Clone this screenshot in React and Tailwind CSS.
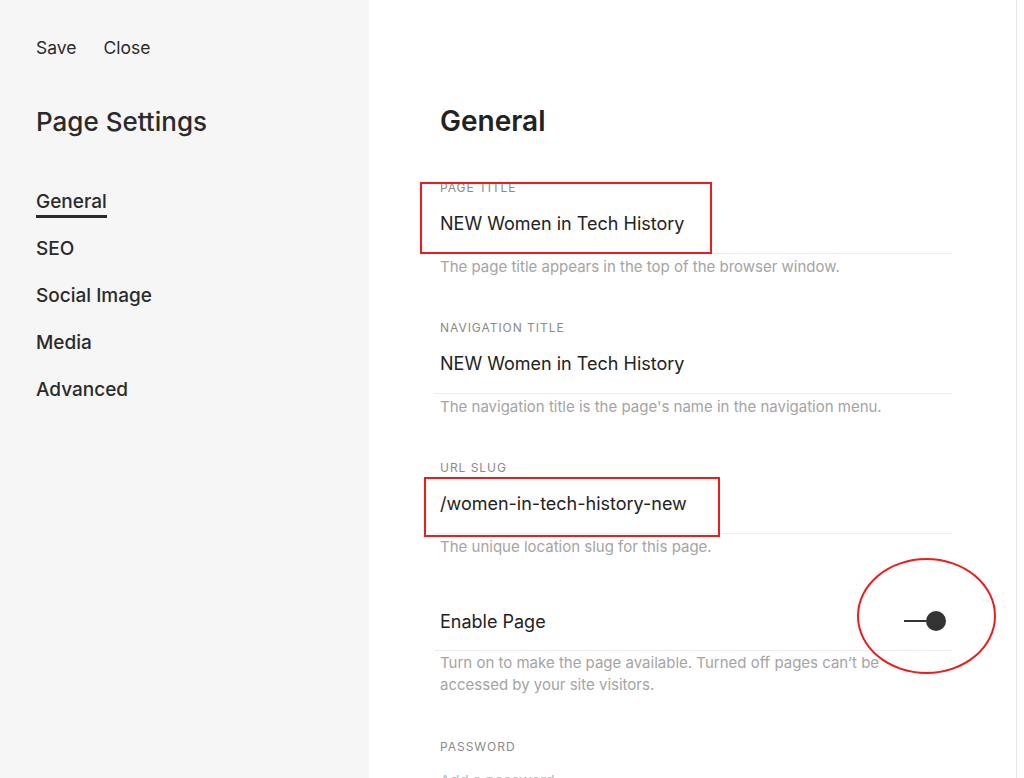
export default function App() {
  const f = { fontFamily: 'Inter, "Noto Sans", sans-serif' };
  const Field = ({ label, value, help, mt }) => (
    <div className={mt}>
      <div className="text-[12px] tracking-[0.08em] text-[#8a8a8a] h-[14px] leading-[14px]">{label}</div>
      <div className="text-[18px] text-[#222] mt-[19px] leading-[20px]">{value}</div>
      <div className="border-t border-[#ececec] mt-[19px] -ml-[6px]"></div>
      <div className="text-[15px] text-[#a4a4a4] mt-[2px] leading-[22px]">{help}</div>
    </div>
  );
  return (
    <div className="relative w-[1024px] h-[778px] overflow-hidden flex bg-white" style={f}>
      <div className="w-[369px] shrink-0 bg-[#f6f6f6] pl-[36px] pt-[37px] text-[#2a2a2a]">
        <div className="flex gap-[27px] text-[17.5px] leading-[22px]"><span>Save</span><span>Close</span></div>
        <div className="text-[26px] font-medium mt-[48px] leading-[30px]">Page Settings</div>
        <div className="mt-[53px] flex flex-col gap-[24px] text-[19px] font-medium leading-[23px]">
          <span className="inline-block w-fit border-b-[3px] border-[#2a2a2a] pb-[2px] -mb-[5px]">General</span>
          <span>SEO</span><span>Social Image</span><span>Media</span><span>Advanced</span>
        </div>
      </div>
      <div className="flex-1 pl-[71px] pr-[64px] pt-[104px]">
        <div className="text-[28px] font-semibold text-[#222] leading-[34px]">General</div>
        <div className="mt-[43px] flex flex-col">
          <Field label="PAGE TITLE" value="NEW Women in Tech History" help="The page title appears in the top of the browser window." />
          <Field mt="mt-[43px]" label="NAVIGATION TITLE" value="NEW Women in Tech History" help="The navigation title is the page's name in the navigation menu." />
          <Field mt="mt-[43px]" label="URL SLUG" value="/women-in-tech-history-new" help="The unique location slug for this page." />
          <div className="mt-[48px] flex items-center justify-between h-[30px]">
            <span className="text-[18px] text-[#222]">Enable Page</span>
            <span className="flex items-center mr-[6px]">
              <span className="w-[22px] h-[2px] bg-[#333]"></span>
              <span className="w-[20px] h-[20px] rounded-full bg-[#333]"></span>
            </span>
          </div>
          <div className="border-t border-[#ececec] mt-[14px] -ml-[6px]"></div>
          <div className="text-[15px] text-[#a4a4a4] mt-[1px] leading-[22px] w-[470px]">Turn on to make the page available. Turned off pages can’t be accessed by your site visitors.</div>
          <div className="mt-[42px] text-[12px] tracking-[0.08em] text-[#8a8a8a]">PASSWORD</div>
          <div className="mt-[14px] text-[15px] text-[#bbb]">Add a password</div>
        </div>
      </div>
      <div className="w-[8px] border-l border-[#e6e6e6] bg-white"></div>
      <div className="absolute left-[420px] top-[182px] w-[292px] h-[72px] border-2 border-[#ee1c1c]"></div>
      <div className="absolute left-[424px] top-[477px] w-[296px] h-[60px] border-2 border-[#ee1c1c]"></div>
      <div className="absolute left-[857px] top-[558px] w-[139px] h-[116px] rounded-[50%] border-2 border-[#ee1c1c]"></div>
    </div>
  );
}
